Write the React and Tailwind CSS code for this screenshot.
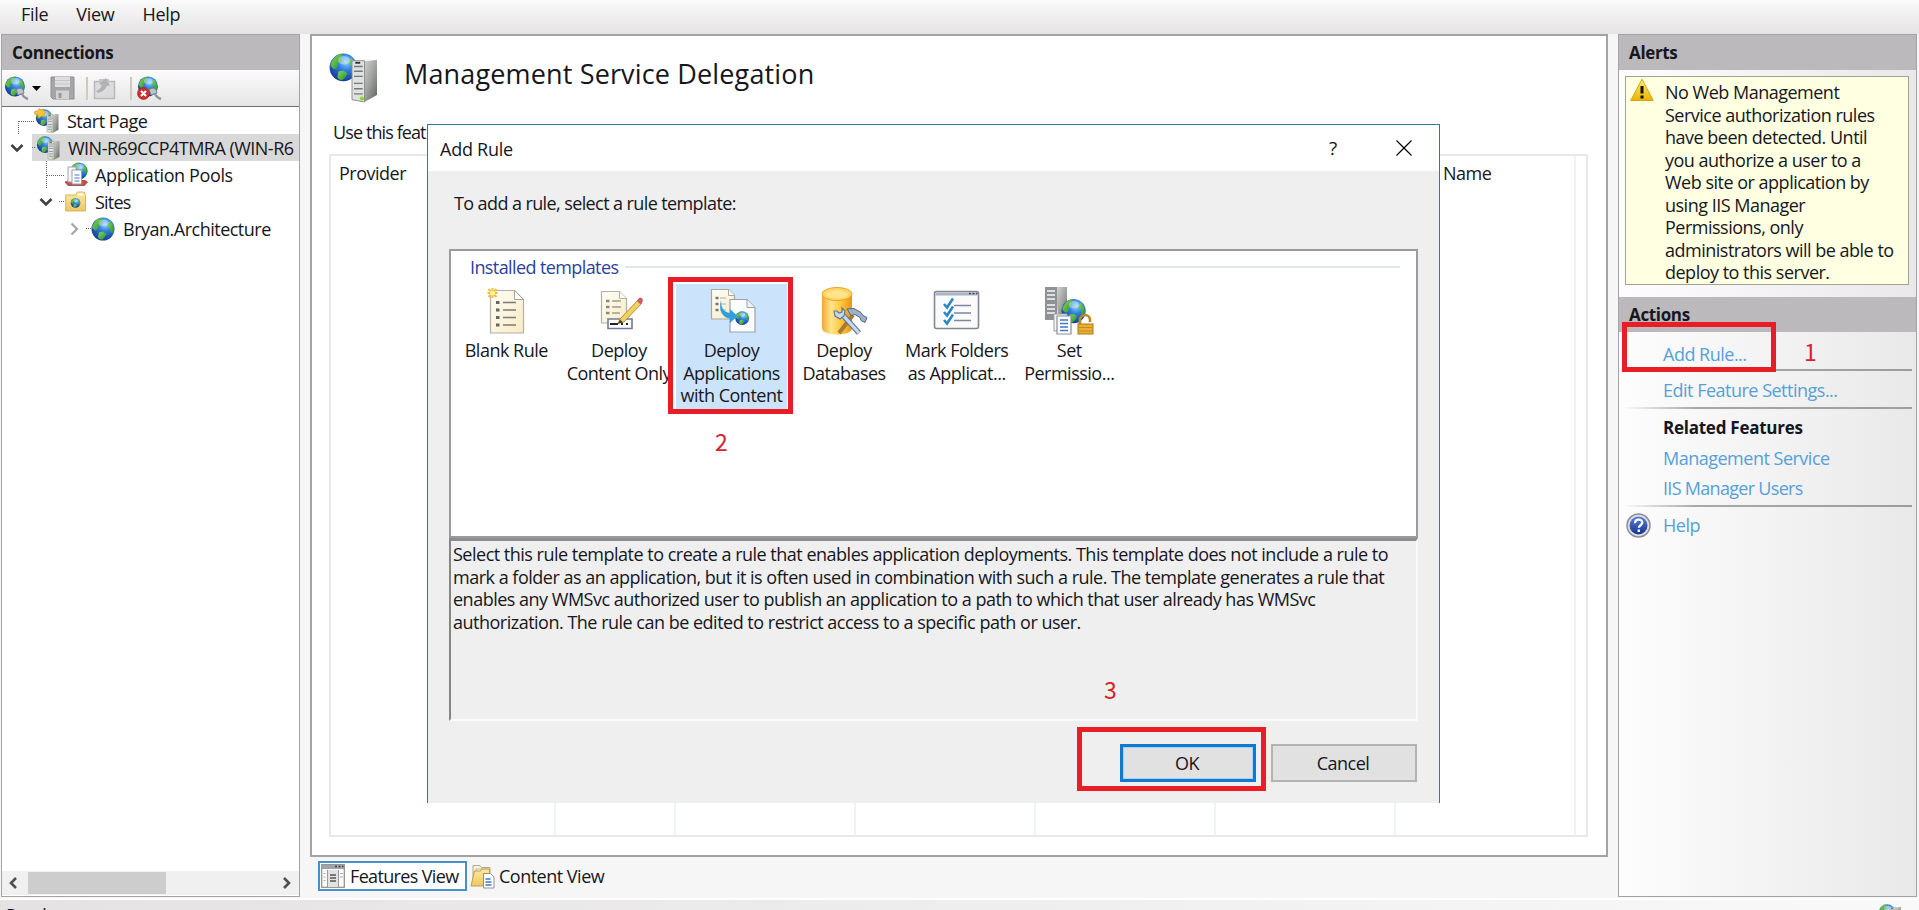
function Defs() {
  return (
    <svg className="absolute h-0 w-0" aria-hidden="true">
      <defs>
        <radialGradient id="ocean" cx="0.6" cy="0.3" r="0.75">
          <stop offset="0" stopColor="#8fd6f7" />
          <stop offset="0.4" stopColor="#2f7fe0" />
          <stop offset="1" stopColor="#12348f" />
        </radialGradient>
        <linearGradient id="land" x1="0" y1="0" x2="1" y2="1">
          <stop offset="0" stopColor="#8fd65a" />
          <stop offset="1" stopColor="#1f9030" />
        </linearGradient>
        <linearGradient id="steel" x1="0" y1="0" x2="1" y2="1">
          <stop offset="0" stopColor="#d6d8d6" />
          <stop offset="0.5" stopColor="#a3a5a2" />
          <stop offset="1" stopColor="#5f625f" />
        </linearGradient>
        <linearGradient id="cyl" x1="0" y1="0" x2="1" y2="0">
          <stop offset="0" stopColor="#f0a830" />
          <stop offset="0.3" stopColor="#ffe58c" />
          <stop offset="0.65" stopColor="#ffc53a" />
          <stop offset="1" stopColor="#e89412" />
        </linearGradient>
        <linearGradient id="paper" x1="0" y1="0" x2="1" y2="1">
          <stop offset="0" stopColor="#fffef8" />
          <stop offset="1" stopColor="#f8ebc4" />
        </linearGradient>
        <linearGradient id="folder" x1="0" y1="0" x2="0" y2="1">
          <stop offset="0" stopColor="#fdeaa2" />
          <stop offset="1" stopColor="#eec762" />
        </linearGradient>
        <linearGradient id="warn" x1="0" y1="0" x2="0" y2="1">
          <stop offset="0" stopColor="#fff06a" />
          <stop offset="1" stopColor="#e9b400" />
        </linearGradient>
        <linearGradient id="help" x1="0" y1="0" x2="0" y2="1">
          <stop offset="0" stopColor="#5b7fd6" />
          <stop offset="1" stopColor="#17338f" />
        </linearGradient>
      </defs>
    </svg>
  );
}

function Globe({ x = 0, y = 0, s = 1 }) {
  return (
    <g transform={`translate(${x} ${y}) scale(${s})`}>
      <circle cx="12" cy="12" r="11.5" fill="url(#ocean)" />
      <path d="M3 6C5 3 8 1 10 .8L12 2.500 9.500 4.500l1 2.500-3 2-1 3.500-2.500 1-2.500-2.500C1 9.500 1.600 8 3 6z" fill="url(#land)" />
      <path d="M8 15.500l4-1 3.500 2.500-2 3.500-2.500 2.300C9 22.500 8 22 7 20z" fill="url(#land)" />
      <path d="M18.500 4l3 3.500 1.500 4-1 5-2.500-1.500-.5-4-2.500-2z" fill="url(#land)" />
      <ellipse cx="12.500" cy="6" rx="5" ry="3.600" fill="#fff" opacity="0.35" />
    </g>
  );
}

function Tower({ x = 0, y = 0, w = 10, h = 18 }) {
  return (
    <g transform={`translate(${x} ${y}) scale(${w / 10} ${h / 18})`}>
      <path d="M4 0.500L10 0v15l-5 3z" fill="url(#steel)" />
      <path d="M0 .3h5V18L0 17z" fill="#e0e2e2" stroke="#8b8e8e" strokeWidth="0.400" />
      <path d="M.8 2.800h3.500M.8 4.800h3.500M.8 7h3.500M.8 10h3.500M.8 12.300h3.500M.8 14.500h3.500" stroke="#747878" strokeWidth="0.600" />
      <path d="M1.300 1.200h2" stroke="#333" strokeWidth="0.800" />
      <circle cx="4" cy="16.500" r="0.900" fill="#8ed82a" />
    </g>
  );
}

function HeaderIcon() {
  return (
    <svg className="h-[50px] w-[50px] shrink-0" viewBox="0 0 50 50">
      <Globe x={0} y={0} s={1.2} />
      <Tower x={23} y={7} w={25} h={42} />
    </svg>
  );
}

function ConnectIcon({ remove }) {
  return (
    <svg className="h-[26px] w-[26px] shrink-0" viewBox="0 0 26 26">
      <Globe x={0.5} y={1} s={0.87} />
      <path d="M12 14.500l4-1.500 3 1.500 1 3.500-3 1-3 1z" fill="#b9c3cb" stroke="#7c868f" />
      <path d="M18 18.500c1 3.500 3 4.500 6 5.500" fill="none" stroke="#8b959e" strokeWidth="2.500" />
      {remove && (
        <g>
          <circle cx="6.500" cy="18.500" r="6" fill="#d02d2d" stroke="#a01c1c" strokeWidth="0.600" />
          <path d="M4 16l5 5M9 16l-5 5" stroke="#fff" strokeWidth="2" />
        </g>
      )}
    </svg>
  );
}

function ServerIcon({ star }) {
  return (
    <svg className="h-[26px] w-[26px] shrink-0" viewBox="0 0 26 26">
      <Globe x={1.5} y={1} s={0.72} />
      {star && (
        <path d="M1 3h3l1-2.500L7 2l2.500-1L10 3l2 1.500L10 6l.5 3L7.500 8 5 10 4 7 .5 6z" fill="#f7c433" stroke="#d9962a" strokeWidth="0.700" />
      )}
      <Tower x={13} y={6} w={11.5} h={19} />
    </svg>
  );
}

function StatusIcon() {
  return (
    <svg className="h-[26px] w-[26px] shrink-0" viewBox="0 0 26 26">
      <Globe x={1.5} y={0} s={0.72} />
      <Tower x={12.500} y={3} w={11.5} h={19} />
    </svg>
  );
}

function PoolsIcon() {
  return (
    <svg className="h-[25px] w-[25px] shrink-0" viewBox="0 0 25 25">
      <Globe x={6} y={0} s={0.75} />
      <path d="M1 20l5-1.500h15l2.500 1.500-3 3.500H4z" fill="#c9504a" stroke="#8d3431" strokeWidth="0.700" />
      <path d="M4 5h8v15H4z" fill="#f6f6f8" stroke="#a3a5ab" />
      <path d="M8 8h9.500v14H8z" fill="#fff" stroke="#9da0a6" />
      <path d="M10.500 13h5M10.500 16h5M10.500 19h5" stroke="#4a74bb" strokeWidth="1.200" />
    </svg>
  );
}

function SitesIcon() {
  return (
    <svg className="h-[22px] w-[22px] shrink-0" viewBox="0 0 22 22">
      <path d="M.7 4h10l1.500-3h7L20.500 4.500V20H.7z" fill="url(#folder)" stroke="#cfa548" strokeWidth="0.800" />
      <path d="M12.500 3.500h6" stroke="#fff" strokeWidth="1.500" />
      <Globe x={5.5} y={7} s={0.42} />
    </svg>
  );
}

function GlobeIcon() {
  return (
    <svg className="h-6 w-6 shrink-0" viewBox="0 0 24 24">
      <Globe />
    </svg>
  );
}

function SaveIcon() {
  return (
    <svg className="h-6 w-[25px] shrink-0" viewBox="0 0 25 24">
      <path d="M1 1h23v22H3l-2-2z" fill="#a5a5a7" stroke="#8e8e90" />
      <path d="M5 1h15v10H5z" fill="#dedede" />
      <path d="M5 4.500h15M5 8h15" stroke="#c6c6c8" />
      <path d="M6 14.500h13V23H6z" fill="#d2d2d2" />
      <path d="M8.500 17h3v5h-3z" fill="#9a9a9c" />
    </svg>
  );
}

function UpIcon() {
  return (
    <svg className="h-6 w-[23px] shrink-0" viewBox="0 0 23 24">
      <path d="M1.500 5.500h20v17h-20z" fill="#dcdcdc" stroke="#b9b9bb" strokeWidth="1.500" />
      <path d="M6 5V3h10v4H6z" fill="#c4c4c6" />
      <path d="M3 15c3-1 5-3 6-6L6 8l7-6 4 8-3-.5c-1.500 4-5 6.500-9 7.500z" fill="#b2b2b5" />
    </svg>
  );
}

function BlankRuleIcon() {
  return (
    <svg className="h-[50px] w-[50px]" viewBox="0 0 50 50">
      <path d="M9.500 4.500h24l9 9V47h-33z" fill="url(#paper)" stroke="#b4b0a6" strokeWidth="1.200" />
      <path d="M33.500 4.500v9h9z" fill="#fff" stroke="#a8a49a" />
      <path d="M22 16.500h13M22 24h13M22 31.500h13M22 39h13" stroke="#7e7a76" strokeWidth="1.300" />
      <path d="M15 16.500h3.500M15 24h3.500M15 31.500h3.500M15 39h3.500" stroke="#6a6664" strokeWidth="3" />
      <path d="M11.500 2v10M6.500 7h10M7.500 3l8 8M15.500 3l-8 8" stroke="#f3bd35" strokeWidth="2" />
      <circle cx="11.500" cy="7" r="2.500" fill="#fff3a8" />
    </svg>
  );
}

function ContentIcon() {
  return (
    <svg className="h-[50px] w-[50px]" viewBox="0 0 50 50">
      <path d="M7.500 5.500h18l7 7V37h-25z" fill="url(#paper)" stroke="#b3b0a8" strokeWidth="1.200" />
      <path d="M25.500 5.500v7h7" fill="#fff" stroke="#b3b0a8" />
      <path d="M18 15h9M18 21h9M18 27h8" stroke="#a09c92" strokeWidth="1.300" />
      <path d="M12 15h3.500M12 21h3.500M12 27h3.500" stroke="#8b8780" strokeWidth="2.600" />
      <path d="M14 33h24v9.500H14z" fill="#fff" stroke="#6f7c97" strokeWidth="1.600" />
      <path d="M16 38h8M27 38h2M32 38h2" stroke="#222" strokeWidth="2" />
      <path d="M26 33l18-19 3.500 3.500L30 36l-6 1.500z" fill="#f3cf62" stroke="#9f7b2d" strokeWidth="0.800" />
      <path d="M43 15l2-3c3-1 4.500 1 3.500 4l-2 2.500z" fill="#cb5b68" />
      <path d="M24 37.500l2-4 3 3z" fill="#4a3a28" />
    </svg>
  );
}

function AppsIcon() {
  return (
    <svg className="h-[50px] w-[50px]" viewBox="0 0 50 50">
      <path d="M5.500 3.500h17l6 6V33h-23z" fill="url(#paper)" stroke="#a8a8a0" strokeWidth="1.200" />
      <path d="M22.500 3.500v6h6" fill="#fff" stroke="#a8a8a0" />
      <path d="M14 12h6M14 18h6M14 24h6" stroke="#b0aca0" strokeWidth="1.200" />
      <path d="M9.500 12h3M9.500 18h3M9.500 24h3" stroke="#7b7870" strokeWidth="2.600" />
      <path d="M24 13.500h17l8 8V46H24z" fill="#fcfcfd" stroke="#9ba2ae" strokeWidth="1.200" />
      <path d="M41 13.500v8h8" fill="#eef1f5" stroke="#9ba2ae" />
      <Globe x={29} y={25} s={0.6} />
      <path d="M15 14c0 9 3 12 9 13v-4l7.500 7-7.500 7v-4.500C17 32 12 25 15 14z" fill="#2f9fe0" />
    </svg>
  );
}

function DatabaseIcon() {
  return (
    <svg className="h-[50px] w-[50px]" viewBox="0 0 50 50">
      <path d="M3 8v34c0 4 6 6.500 15 6.500S33 46 33 42V8z" fill="url(#cyl)" />
      <ellipse cx="18" cy="8" rx="15" ry="6.500" fill="#ffd566" stroke="#e9a320" />
      <ellipse cx="18" cy="8.500" rx="11" ry="4" fill="#ffe9a0" opacity="0.700" />
      <path d="M34 29L20 47" stroke="#a77a35" strokeWidth="4" />
      <path d="M28 23l7-.5 7 4 2 3 4 2-2 5-4-2-1-3-5-3-4 1z" fill="#9db0c8" stroke="#566781" />
      <path d="M22 27l18 20" stroke="#61779b" strokeWidth="5.600" />
      <path d="M22 27l18 20" stroke="#c9d8ea" strokeWidth="3.300" />
      <path d="M15 25l1 5 5 3 4-3 1-5-3-3v4l-3 1-2-2z" fill="#c9d8ea" stroke="#61779b" strokeWidth="1.200" />
    </svg>
  );
}

function FoldersIcon() {
  return (
    <svg className="h-[50px] w-[50px]" viewBox="0 0 50 50">
      <rect x="2.500" y="5.500" width="44" height="37" rx="2" fill="#fbfbfc" stroke="#83868e" strokeWidth="1.600" />
      <path d="M3.500 8h42" stroke="#a9b4c4" strokeWidth="3" />
      <path d="M37 7.500h2M40.500 7.500h2M44 7.500h1.500" stroke="#445" strokeWidth="1.500" />
      <path d="M22 19.500h17M22 27h17M22 34.500h17" stroke="#7c87a5" strokeWidth="1.500" />
      <path d="M12 18l3 3.500 6-9M12 26l3 3.500 6-9M12 34l3 3.500 6-9" fill="none" stroke="#2f88c4" strokeWidth="2.600" />
    </svg>
  );
}

function PermissionsIcon() {
  return (
    <svg className="h-[50px] w-[50px]" viewBox="0 0 50 50">
      <path d="M12 1h11v30l-9 3z" fill="url(#steel)" />
      <path d="M1 1h12v33H1z" fill="#8f9294" />
      <path d="M3 5h8M3 9h8M3 13h8M3 19h8M3 23h8M3 27h8" stroke="#dcdfe0" strokeWidth="2" />
      <Globe x={17} y={12.5} s={1.05} />
      <path d="M10 28h13v17H10z" fill="#f4f4f6" stroke="#9a9da4" />
      <path d="M13 30h14v18H13z" fill="#fff" stroke="#8a8d94" strokeWidth="1.200" />
      <path d="M16 34h8M16 37.500h8M16 41h8M16 44.500h8" stroke="#3f79c2" strokeWidth="1.600" />
      <path d="M36 38v-4a5 5 0 0 1 10 0v2" fill="none" stroke="#b98a25" strokeWidth="2.600" />
      <rect x="34" y="38" width="15" height="10" fill="#eab034" stroke="#a9761a" />
      <path d="M34 41.500h15M34 45h15" stroke="#c28d1f" />
    </svg>
  );
}

function WarningIcon() {
  return (
    <svg className="h-6 w-6 shrink-0" viewBox="0 0 24 24">
      <path d="M12 1.200L23.300 22.500H.7z" fill="url(#warn)" stroke="#d6a419" strokeLinejoin="round" />
      <path d="M12 8v7.500" stroke="#111" strokeWidth="3" />
      <path d="M12 17.500v3" stroke="#111" strokeWidth="3" />
    </svg>
  );
}

function HelpIcon() {
  return (
    <svg className="h-[25px] w-[25px] shrink-0" viewBox="0 0 25 25">
      <circle cx="12.500" cy="12.500" r="11.500" fill="#dcdee4" stroke="#8b8e98" strokeWidth="1.500" />
      <circle cx="12.500" cy="12.500" r="9" fill="url(#help)" />
      <path d="M9 10.200c0-4.800 7.300-4.500 7.300-.6 0 2.700-3.500 2.600-3.500 5.200" fill="none" stroke="#fff" strokeWidth="2.200" />
      <path d="M12.800 16.500v2.500" stroke="#fff" strokeWidth="2.400" />
    </svg>
  );
}

function FeaturesIcon() {
  return (
    <svg className="h-[24px] w-[24px] shrink-0" viewBox="0 0 24 24">
      <rect x="0.700" y="0.700" width="22.600" height="22.600" fill="#fafafa" stroke="#8c8c8e" strokeWidth="1.200" />
      <path d="M1 3h22" stroke="#a0a4a8" strokeWidth="4" />
      <path d="M14 2.500h2M17.500 2.500h2M21 2.500h1.500" stroke="#444" strokeWidth="1.300" />
      <path d="M6.500 6v17M17.500 6v17" stroke="#9a9a9c" />
      <path d="M2.500 9.500h2M2.500 13h2M2.500 16.500h2M19 9.500h3M19 13h3" stroke="#aaa" strokeWidth="1.200" />
      <path d="M7 6h10v17H7z" fill="#e2e2e0" />
      <path d="M9 11h6M9 14h6M9 17h6" stroke="#555" strokeWidth="1.500" />
    </svg>
  );
}

function ContentViewIcon() {
  return (
    <svg className="h-[25px] w-[25px] shrink-0" viewBox="0 0 25 25">
      <path d="M3 1.500h7l1.500 2H20V18H3z" fill="#f6f1e2" stroke="#b5aa8e" />
      <path d="M6 5h13v13H6z" fill="#fff" stroke="#c2b68f" />
      <path d="M1 22L4.500 7h6l1-2h8v15l-8 2z" fill="url(#folder)" stroke="#c39b48" />
      <path d="M13.500 9.500h7l3.500 3.500v11H13.500z" fill="#fff" stroke="#8f9198" />
      <path d="M15.500 15h5M15.500 18h6M15.500 21h6" stroke="#3f79c2" strokeWidth="1.300" />
    </svg>
  );
}

function Chevron({ open }) {
  return (
    <svg className="h-[14px] w-[14px] shrink-0" viewBox="0 0 14 14">
      {open ? (
        <path d="M1.500 4l5.500 5.500L12.500 4" fill="none" stroke="#404040" strokeWidth="2.600" />
      ) : (
        <path d="M4.500 1.500L10 7l-5.500 5.500" fill="none" stroke="#a6a6a6" strokeWidth="2.200" />
      )}
    </svg>
  );
}

function PanelTitle({ children }) {
  return <h2 className="flex h-[35px] shrink-0 items-center bg-[#bbb9bc] pt-px text-[17px] font-bold tracking-[-0.35px]">{children}</h2>;
}

function Connections() {
  return (
    <section className="flex h-[863px] w-[299px] shrink-0 flex-col border border-[#a3a3a5] bg-white">
      <PanelTitle><span className="pl-[10px]">Connections</span></PanelTitle>
      <div className="flex h-[37px] shrink-0 items-center border-b border-[#6c6c80] bg-linear-to-b from-[#fbfbfb] to-[#e6e5e6] pl-[2px]">
        <ConnectIcon />
        <svg className="ml-[2px] h-[5px] w-[9px]" viewBox="0 0 9 5"><path d="M0 0h9L4.500 5z" /></svg>
        <span className="ml-[9px] flex"><SaveIcon /></span>
        <span className="ml-[11px] h-[23px] w-[2px] bg-[#cdcbbc]" />
        <span className="ml-[5px] flex"><UpIcon /></span>
        <span className="ml-[14px] h-[23px] w-[2px] bg-[#cdcbbc]" />
        <span className="ml-[5px] flex"><ConnectIcon remove /></span>
      </div>
      <div className="flex min-h-0 flex-1 flex-col overflow-hidden whitespace-nowrap">
        <div className="flex h-[27px] shrink-0 items-center pl-[16px]">
          <span className="mt-[14px] h-[13px] w-[16px] border-t border-l border-dotted border-[#666]" />
          <ServerIcon star />
          <span className="pl-[7px]">Start Page</span>
        </div>
        <div className="flex h-[27px] shrink-0 items-center pl-[8px]">
          <Chevron open />
          <span className="ml-[6px] w-[2px]" />
          <div className="flex h-full flex-1 items-center bg-[#d9d9d9]">
            <span className="w-[3px] border-t border-dotted border-[#666]" />
            <ServerIcon />
            <span className="pl-[7px] tracking-[-0.52px]">WIN-R69CCP4TMRA (WIN-R6</span>
          </div>
        </div>
        <div className="flex h-[27px] shrink-0 items-center pl-[44px]">
          <span className="flex h-full w-[18px] flex-col border-l border-dotted border-[#666]">
            <span className="mt-[14px] border-t border-dotted border-[#666]" />
          </span>
          <PoolsIcon />
          <span className="pl-[6px] tracking-[-0.38px]">Application Pools</span>
        </div>
        <div className="flex h-[27px] shrink-0 items-center pl-[37px]">
          <Chevron open />
          <span className="mr-[1px] ml-[6px] w-[5px] border-t border-dotted border-[#666]" />
          <SitesIcon />
          <span className="pl-[8px] tracking-[-0.8px]">Sites</span>
        </div>
        <div className="flex h-[27px] shrink-0 items-center pl-[65px]">
          <Chevron />
          <span className="ml-[5px] w-[5px] border-t border-dotted border-[#666]" />
          <GlobeIcon />
          <span className="pl-[8px]">Bryan.Architecture</span>
        </div>
      </div>
      <div className="mb-px flex h-[24px] shrink-0 items-center bg-[#f0f0f0]">
        <svg className="ml-[6px] h-3 w-[10px]" viewBox="0 0 10 12"><path d="M8 1L3 6l5 5" fill="none" stroke="#505050" strokeWidth="2.600" /></svg>
        <span className="ml-[10px] h-[22px] w-[138px] bg-[#cdcdcd]" />
        <svg className="mr-[7px] ml-auto h-3 w-[10px]" viewBox="0 0 10 12"><path d="M2 1l5 5-5 5" fill="none" stroke="#505050" strokeWidth="2.600" /></svg>
      </div>
    </section>
  );
}

const COLUMNS = ['w-[225px]', 'w-[120px]', 'w-[180px]', 'w-[180px]', 'w-[180px]', 'w-[180px]', 'w-[180px]'];
const HEADINGS = ['Provider', '', '', '', '', '', 'Name'];

function Workspace() {
  return (
    <section className="ml-[10px] flex w-[1298px] shrink-0 flex-col">
      <div className="flex h-[823px] flex-col border-2 border-[#a3a3a5] bg-white pr-[18px] pb-[18px] pl-[17px]">
        <header className="mt-[16px] flex h-[52px] items-center">
          <HeaderIcon />
          <h1 className="pb-[9px] pl-[25px] text-[27px] tracking-[0.150px]">Management Service Delegation</h1>
        </header>
        <p className="mt-[15px] h-[35px] pl-[4px] leading-[26px] tracking-[-0.9px]">Use this feat</p>
        <div className="flex flex-1 border-2 border-[#e8e8e8]">
          {COLUMNS.map((w, i) => (
            <div key={i} className={`${w} shrink-0 border-r-2 border-[#eef3f7] pt-[4px] pl-[8px] leading-[26px]`}>
              {HEADINGS[i] && <span className={i === 6 ? 'pl-[39px]' : ''}>{HEADINGS[i]}</span>}
            </div>
          ))}
        </div>
      </div>
      <div className="mt-[4px] flex h-[30px] items-center pl-[8px]">
        <div className="flex h-[30px] w-[149px] items-center border-2 border-[#4690cf] bg-white pl-[1px]">
          <FeaturesIcon />
          <span className="pb-px pl-[5px] tracking-[-0.65px]">Features View</span>
        </div>
        <div className="flex items-center pl-[3px]">
          <ContentViewIcon />
          <span className="pb-px pl-[4px]">Content View</span>
        </div>
      </div>
    </section>
  );
}

function Rule() {
  return <div className="mx-[4px] h-[2px] shrink-0 bg-linear-to-r from-transparent via-[#a9a9a9] via-25% to-[#9c9c9c]" />;
}

function Link({ children }) {
  return <a className="pl-[44px] text-[#569fd8]">{children}</a>;
}

function Sidebar() {
  return (
    <aside className="ml-[10px] flex h-[863px] w-[299px] shrink-0 flex-col border border-[#a3a3a5] bg-linear-to-r from-[#fdfdfd] to-[#e9e9e9]">
      <PanelTitle><span className="pl-[10px]">Alerts</span></PanelTitle>
      <div className="mt-[6px] ml-[6px] flex h-[209px] w-[284px] shrink-0 border border-[#a3a395] bg-[#ffffe1] pl-[4px]">
        <span className="mt-[1px] flex"><WarningIcon /></span>
        <p className="mt-[4px] ml-[11px] w-[236px] leading-[22.550px] whitespace-nowrap">
          No Web Management<br />Service authorization rules<br />have been detected. Until<br />you authorize a user to a<br />Web site or application by<br />using IIS Manager<br />Permissions, only<br />administrators will be able to<br />deploy to this server.
        </p>
      </div>
      <div className="mt-[12px] flex flex-col">
        <PanelTitle><span className="pl-[10px]">Actions</span></PanelTitle>
        <div className="flex h-[37px] items-center pt-[6px]"><Link>Add Rule...</Link></div>
        <Rule />
        <div className="flex h-[36px] items-center pt-[1px]"><Link>Edit Feature Settings...</Link></div>
        <Rule />
        <div className="flex h-[36px] items-center pt-px pl-[44px] text-[17px] font-bold tracking-[-0.25px]">Related Features</div>
        <div className="flex h-[30px] items-center pb-[5px]"><Link>Management Service</Link></div>
        <div className="flex h-[30px] items-center pb-[5px] tracking-[-0.7px]"><Link>IIS Manager Users</Link></div>
        <Rule />
        <div className="flex h-[36px] items-center pl-[7px]">
          <HelpIcon />
          <a className="pl-[12px] text-[#569fd8]">Help</a>
        </div>
      </div>
    </aside>
  );
}

const TEMPLATES = [
  { icon: BlankRuleIcon, lines: ['Blank Rule'] },
  { icon: ContentIcon, lines: ['Deploy', 'Content Only'] },
  { icon: AppsIcon, lines: ['Deploy', 'Applications', 'with Content'], selected: true },
  { icon: DatabaseIcon, lines: ['Deploy', 'Databases'] },
  { icon: FoldersIcon, lines: ['Mark Folders', 'as Applicat...'] },
  { icon: PermissionsIcon, lines: ['Set', 'Permissio...'] },
];

function AddRuleDialog() {
  return (
    <div className="absolute top-[124px] left-[427px] flex h-[679px] w-[1013px] flex-col border border-b-0 border-[#2f7a9c] bg-[#efefef]">
      <div className="flex h-[46px] shrink-0 items-center bg-white pl-[12px]">
        <span className="pt-px tracking-[-0.250px]">Add Rule</span>
        <span className="ml-auto w-[10px] text-[19px]">?</span>
        <svg className="mr-[27px] ml-[57px] h-4 w-4" viewBox="0 0 16 16"><path d="M.5.5l15 15M15.500.5l-15 15" stroke="#000" strokeWidth="1.200" /></svg>
      </div>
      <p className="h-[78px] shrink-0 pt-[20px] pl-[26px] leading-[24px] tracking-[-0.6px]">To add a rule, select a rule template:</p>
      <div className="mx-[21px] flex h-[289px] w-[969px] shrink-0 flex-col border-2 border-[#999b9e] bg-white">
        <div className="flex h-[31px] items-center pl-[19px]">
          <span className="tracking-[-0.600px] text-[#2b3f9f]">Installed templates</span>
          <span className="mr-[16px] ml-[7px] h-[2px] flex-1 bg-[#dfe7ef]" />
        </div>
        <div className="flex gap-[2px] pt-[2px]">
          {TEMPLATES.map((t) => (
            <div
              key={t.lines.join(' ')}
              className={`flex h-[126px] w-[110.600px] flex-col items-center pt-[2px] leading-[22.600px] whitespace-nowrap ${t.selected ? 'bg-[#cce4fb]' : ''}`}
            >
              <t.icon />
              <div className="pt-[3px] text-center">
                {t.lines.map((l) => <div key={l}>{l}</div>)}
              </div>
            </div>
          ))}
        </div>
      </div>
      <div className="mx-[21px] h-[183px] w-[969px] shrink-0 border-t-[3px] border-r-2 border-b-2 border-l-2 border-t-[#8c8c8c] border-r-[#fafafa] border-b-[#fafafa] border-l-[#858585] pt-[2px] pl-[2px] leading-[22.500px] whitespace-nowrap">
        Select this rule template to create a rule that enables application deployments. This template does not include a rule to<br />
        mark a folder as an application, but it is often used in combination with such a rule. The template generates a rule that<br />
        enables any WMSvc authorized user to publish an application to a path to which that user already has WMSvc<br />
        authorization. The rule can be edited to restrict access to a specific path or user.
      </div>
      <div className="mt-[23px] flex gap-[15px] pl-[692px]">
        <button className="h-[38px] w-[136px] border-[3px] border-[#1478cc] bg-[#e1e1e1] pr-[2px] shadow-[inset_0_0_0_1px_#9ad4ff]">OK</button>
        <button className="h-[38px] w-[146px] border-2 border-[#b3b3b3] bg-[#e1e1e1] pr-[2px]">Cancel</button>
      </div>
    </div>
  );
}

function Annotations() {
  return (
    <div className="font-['Noto_Sans_CJK_KR',sans-serif] text-[23px] leading-[24px] tracking-normal text-[#d6232b]">
      <div className="absolute top-[322px] left-[1622px] h-[50px] w-[154px] border-[5px] border-[#e91d25]" />
      <span className="absolute top-[339px] left-[1804px]">1</span>
      <div className="absolute top-[277px] left-[668px] h-[137px] w-[125px] border-[5px] border-[#e91d25]" />
      <span className="absolute top-[429px] left-[715px]">2</span>
      <div className="absolute top-[727px] left-[1077px] h-[64px] w-[189px] border-[5px] border-[#e91d25]" />
      <span className="absolute top-[677px] left-[1104px]">3</span>
    </div>
  );
}

export default function App() {
  return (
    <div className="relative flex h-[910px] w-[1919px] flex-col overflow-hidden bg-[#f6f6f6] font-['Open_Sans','Noto_Sans',sans-serif] text-[18px] leading-[24px] tracking-[-0.500px] text-[#16161c]">
      <Defs />
      <nav className="flex h-[34px] shrink-0 items-center gap-[28px] bg-linear-to-b from-[#fafafa] to-[#e5e3e4] pb-[7px] pl-[21px] tracking-[-0.3px]">
        <span>File</span>
        <span>View</span>
        <span>Help</span>
      </nav>
      <main className="flex h-[864px] shrink-0 pl-px">
        <Connections />
        <Workspace />
        <Sidebar />
      </main>
      <footer className="flex h-[12px] shrink-0 items-start justify-between overflow-hidden border-t-2 border-white bg-linear-to-r from-[#e4e2e3] to-[#f9f9f9] pr-[16px] pl-[6px]">
        <span className="pt-[3px]">Ready</span>
        <span className="pt-[4px]"><StatusIcon /></span>
      </footer>
      <AddRuleDialog />
      <Annotations />
    </div>
  );
}
